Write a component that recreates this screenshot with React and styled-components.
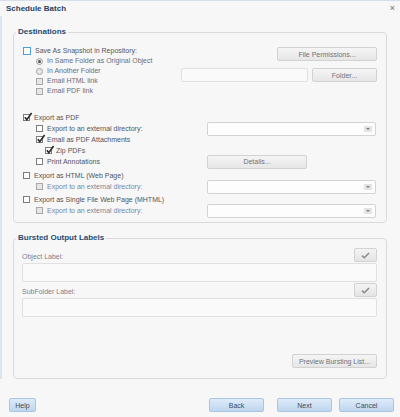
import React from 'react';
import styled, { createGlobalStyle } from 'styled-components';

const Global = createGlobalStyle`
  html, body { margin: 0; padding: 0; background: #f7f7f7; }
  body { font-family: "Liberation Sans", Arial, sans-serif; }
  * { box-sizing: border-box; }
`;

const Window = styled.div`
  width: 400px;
  height: 417px;
  background: #f7f7f7;
  border-top: 1px solid #d3dfec;
  display: flex;
  flex-direction: column;
  overflow: hidden;
`;

const TitleBar = styled.div`
  height: 15px;
  display: flex;
  align-items: center;
  justify-content: space-between;
  padding: 0 5px 0 6px;
`;

const Title = styled.div`
  font-weight: bold;
  font-size: 8px;
  color: #27415c;
`;

const Close = styled.div`
  font-size: 9px;
  line-height: 9px;
  color: #6a6a6a;
`;

const Body = styled.div`
  display: flex;
  flex-direction: column;
  padding: 0 13px;
  box-shadow: inset 2px 0 0 #dbe6f2;
  flex: 1;
`;

const Group = styled.div`
  display: flex;
  flex-direction: column;
  border: 1px solid #dadada;
  border-radius: 4px;
  margin-top: ${p => p.$top}px;
  padding: ${p => p.$pad};
`;

const Legend = styled.div`
  width: fit-content;
  margin: -7px 0 0 ${p => p.$left}px;
  padding: 0 2px;
  background: #f7f7f7;
  font-size: 8px;
  line-height: 11px;
  font-weight: bold;
  color: #1f4b72;
`;

const TopSection = styled.div`
  display: flex;
  justify-content: space-between;
  margin-top: 9px;
`;

const OptionColumn = styled.div`
  display: flex;
  flex-direction: column;
`;

const SideColumn = styled.div`
  display: flex;
  flex-direction: column;
  align-items: flex-end;
  padding-top: 1px;
  gap: 7px;
`;

const InlineRow = styled.div`
  display: flex;
  gap: 4px;
`;

const Row = styled.div`
  display: grid;
  grid-template-columns: 184px 1fr;
  align-items: center;
  height: ${p => p.$h || 11}px;
  margin-top: ${p => p.$top || 0}px;
`;

const Label = styled.label`
  display: flex;
  align-items: center;
  gap: 4px;
  padding-left: ${p => p.$indent || 0}px;
  font-size: 7px;
  line-height: 10px;
  white-space: nowrap;
  color: ${p => (p.$tone === 'muted' ? '#6d6d78' : p.$tone === 'disabled' ? '#7b889d' : '#54545c')};
`;

const Box = styled.span`
  position: relative;
  flex: none;
  width: ${p => (p.$focus ? 8 : 7)}px;
  height: ${p => (p.$focus ? 8 : 7)}px;
  border: 1px solid ${p => (p.$focus ? '#4c9ee3' : p.$disabled ? '#a8a8a8' : '#7d7d7d')};
  background: ${p => (p.$disabled ? '#e7e7e7' : '#ffffff')};
`;

const Tick = styled.svg`
  position: absolute;
  left: -1px;
  top: -3px;
  overflow: visible;
`;

const Radio = styled.span`
  flex: none;
  width: 7px;
  height: 7px;
  border-radius: 50%;
  border: 1px solid #a2a2a2;
  background: #e8e8e8;
  display: flex;
  align-items: center;
  justify-content: center;
  &::after {
    content: '';
    display: ${p => (p.$on ? 'block' : 'none')};
    width: 3px;
    height: 3px;
    border-radius: 50%;
    background: #555;
  }
`;

const Button = styled.button`
  width: ${p => p.$w}px;
  height: 14px;
  padding: 0;
  margin: ${p => (p.$inRow ? '-2px 0' : '0')};
  border: 1px solid #d2d2d2;
  border-radius: 2px;
  background: linear-gradient(#f5f5f5, #e6e6e6);
  font-family: "Liberation Sans", Arial, sans-serif;
  font-size: 7px;
  color: #6c7282;
  align-self: ${p => p.$align || 'auto'};
  margin-top: ${p => (p.$top ? `${p.$top}px` : undefined)};
`;

const TextBox = styled.div`
  width: ${p => (p.$w ? `${p.$w}px` : 'auto')};
  height: ${p => p.$h}px;
  margin-top: ${p => p.$top || 0}px;
  border: 1px solid #e0e0e0;
  border-radius: 2px;
  background: #fafafa;
`;

const Select = styled.div`
  width: 169px;
  height: 14px;
  margin: -2px 0;
  border: 1px solid #d3d3d3;
  border-radius: 2px;
  background: #fdfdfd;
  display: flex;
  justify-content: flex-end;
  align-items: center;
  padding-right: 3px;
`;

const Arrow = styled.span`
  width: 8px;
  height: 6px;
  border-radius: 1px;
  background: #e3e3e6;
  display: flex;
  align-items: center;
  justify-content: center;
  &::after {
    content: '';
    border-left: 2px solid transparent;
    border-right: 2px solid transparent;
    border-top: 2px solid #7a7f8c;
  }
`;

const FieldHead = styled.div`
  display: flex;
  justify-content: space-between;
  align-items: flex-end;
  height: 14px;
  margin-top: ${p => p.$top}px;
`;

const FieldLabel = styled.span`
  font-size: 7px;
  line-height: 10px;
  color: #7d7f8c;
`;

const CheckButton = styled.button`
  width: 23px;
  height: 14px;
  padding: 0;
  border: 1px solid #d2d2d2;
  border-radius: 2px;
  background: linear-gradient(#f4f4f4, #e4e4e4);
  display: flex;
  align-items: center;
  justify-content: center;
`;

const Footer = styled.div`
  display: flex;
  align-items: center;
  margin-top: 19px;
  padding: 0 6px 0 9px;
  margin-bottom: 5px;
`;

const Spacer = styled.div`
  flex: 1;
`;

const BlueButton = styled.button`
  width: ${p => p.$w}px;
  height: 14px;
  margin-left: ${p => p.$left || 0}px;
  padding: 0;
  border: 1px solid #a9c5e4;
  border-radius: 2px;
  background: linear-gradient(#deebf9, #bfd6ef);
  font-family: "Liberation Sans", Arial, sans-serif;
  font-size: 7px;
  color: #3d4b5e;
`;

const Check = ({ checked, disabled, focus }) => (
  <Box $disabled={disabled} $focus={focus}>
    {checked && (
      <Tick width="10" height="10" viewBox="0 0 10 10">
        <path d="M1.8 5.2 L3.8 7.6 L8.6 1" fill="none" stroke="#2a2a2a" strokeWidth="1.6" />
      </Tick>
    )}
  </Box>
);

const Opt = ({ indent, tone, checked, disabled, focus, radio, on, children }) => (
  <Label $indent={indent} $tone={tone}>
    {radio ? <Radio $on={on} /> : <Check checked={checked} disabled={disabled} focus={focus} />}
    {children}
  </Label>
);

const TopRow = styled.div`
  height: 10px;
  display: flex;
  align-items: center;
`;

export default function App() {
  return (
    <>
      <Global />
      <Window>
        <TitleBar>
          <Title>Schedule Batch</Title>
          <Close>×</Close>
        </TitleBar>
        <Body>
          <Group $top={16} $pad="0 9px 6px 9px">
            <Legend $left={-7}>Destinations</Legend>
            <TopSection>
              <OptionColumn>
                <TopRow><Opt focus>Save As Snapshot in Repository:</Opt></TopRow>
                <TopRow><Opt indent={13} tone="muted" radio on>In Same Folder as Original Object</Opt></TopRow>
                <TopRow><Opt indent={13} tone="muted" radio>In Another Folder</Opt></TopRow>
                <TopRow><Opt indent={13} tone="muted" disabled>Email HTML link</Opt></TopRow>
                <TopRow><Opt indent={13} tone="muted" disabled>Email PDF link</Opt></TopRow>
              </OptionColumn>
              <SideColumn>
                <Button $w={100}>File Permissions...</Button>
                <InlineRow>
                  <TextBox $w={127} $h={14} />
                  <Button $w={65}>Folder...</Button>
                </InlineRow>
              </SideColumn>
            </TopSection>

            <Row $top={16}>
              <Opt checked>Export as PDF</Opt>
            </Row>
            <Row>
              <Opt indent={13}>Export to an external directory:</Opt>
              <Select><Arrow /></Select>
            </Row>
            <Row>
              <Opt indent={13} checked>Email as PDF Attachments</Opt>
            </Row>
            <Row>
              <Opt indent={22} checked>Zip PDFs</Opt>
            </Row>
            <Row>
              <Opt indent={13}>Print Annotations</Opt>
              <Button $w={100} $inRow>Details...</Button>
            </Row>
            <Row $top={3}>
              <Opt>Export as HTML (Web Page)</Opt>
            </Row>
            <Row>
              <Opt indent={13} tone="disabled" disabled>Export to an external directory:</Opt>
              <Select><Arrow /></Select>
            </Row>
            <Row $top={2}>
              <Opt>Export as Single File Web Page (MHTML)</Opt>
            </Row>
            <Row>
              <Opt indent={13} tone="disabled" disabled>Export to an external directory:</Opt>
              <Select><Arrow /></Select>
            </Row>
          </Group>

          <Group $top={15} $pad="0 9px 10px 8px">
            <Legend $left={-6}>Bursted Output Labels</Legend>
            <FieldHead $top={5}>
              <FieldLabel>Object Label:</FieldLabel>
              <CheckButton>
                <svg width="9" height="7" viewBox="0 0 9 7">
                  <path d="M1 3.6 L3.3 5.8 L8 1" fill="none" stroke="#8a8a8a" strokeWidth="1.5" />
                </svg>
              </CheckButton>
            </FieldHead>
            <TextBox $h={19} $top={1} />
            <FieldHead $top={1}>
              <FieldLabel>SubFolder Label:</FieldLabel>
              <CheckButton>
                <svg width="9" height="7" viewBox="0 0 9 7">
                  <path d="M1 3.6 L3.3 5.8 L8 1" fill="none" stroke="#8a8a8a" strokeWidth="1.5" />
                </svg>
              </CheckButton>
            </FieldHead>
            <TextBox $h={19} $top={1} />
            <Button $w={85} $align="flex-end" $top={37}>Preview Bursting List...</Button>
          </Group>
        </Body>
        <Footer>
          <BlueButton $w={27}>Help</BlueButton>
          <Spacer />
          <BlueButton $w={55}>Back</BlueButton>
          <BlueButton $w={55} $left={13}>Next</BlueButton>
          <BlueButton $w={55} $left={7}>Cancel</BlueButton>
        </Footer>
      </Window>
    </>
  );
}
